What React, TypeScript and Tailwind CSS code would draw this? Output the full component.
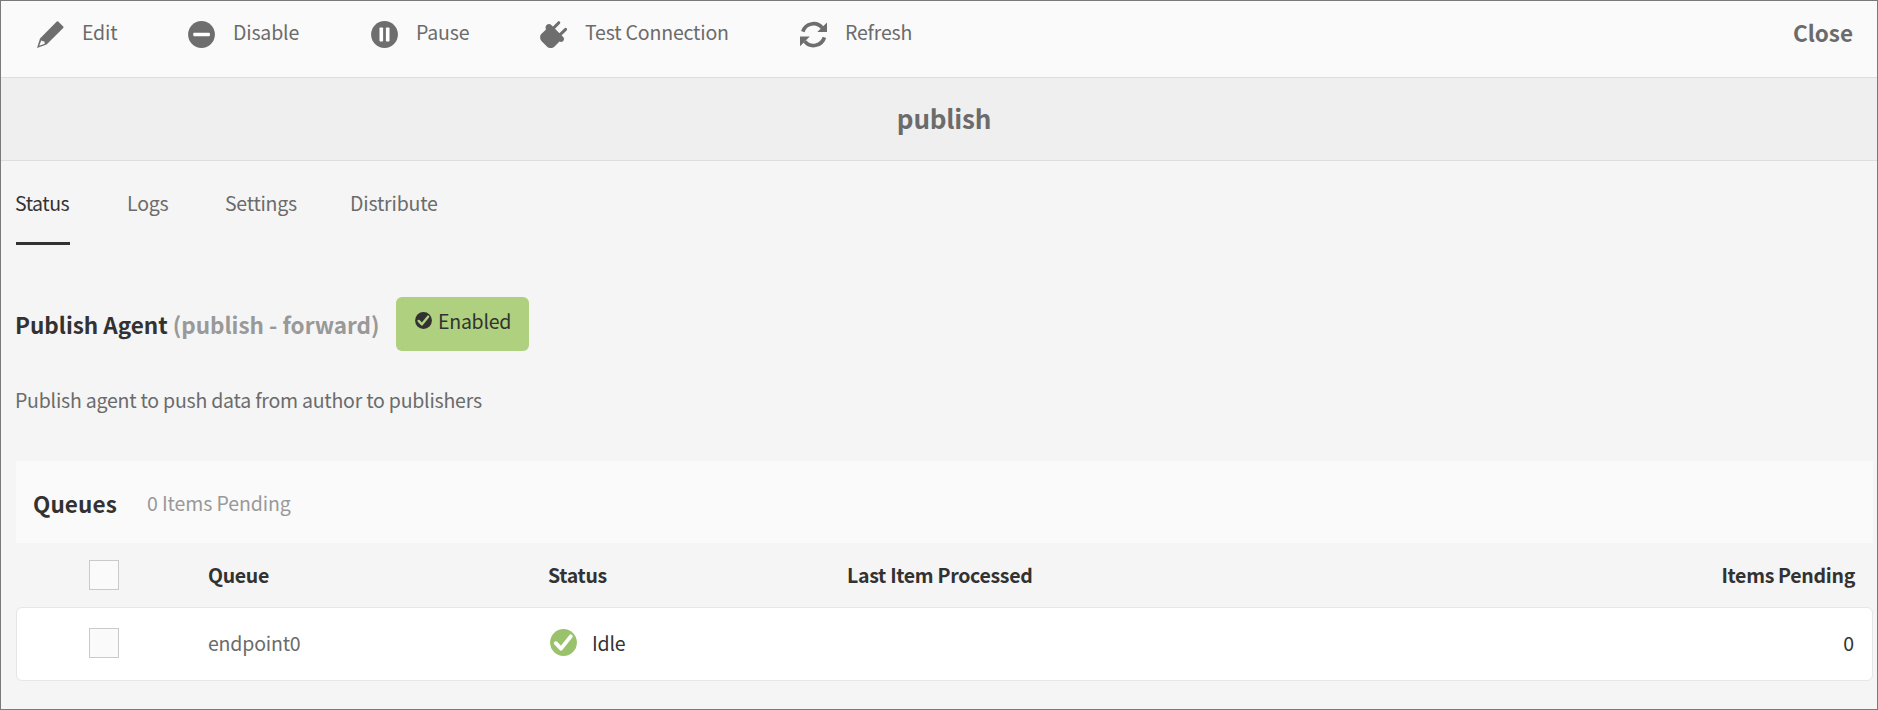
import type { ReactNode } from "react";

const EditIcon = () => (
  <svg className="mt-[3px] h-[27px] w-[27px] shrink-0" viewBox="0 0 27 27" fill="#6e6e6e">
    <path d="M19.8 0.6Q20.5-.1 21.2.6L26.2 5.5Q26.9 6.2 26.2 6.9L9.6 23.6 0 27 3 17.4ZM4.4 19.2 2.2 24.8 7.8 22.8 7.4 20.4 5 19.9Z" fillRule="evenodd" />
  </svg>
);

const DisableIcon = () => (
  <svg className="mt-[3px] h-[27px] w-[27px] shrink-0" viewBox="0 0 27 27">
    <circle cx="13.5" cy="13.5" r="13.4" fill="#6e6e6e" />
    <rect x="5.3" y="11.8" width="16.6" height="3.5" rx="0.8" fill="#fff" />
  </svg>
);

const PauseIcon = () => (
  <svg className="mt-[3px] h-[27px] w-[27px] shrink-0" viewBox="0 0 27 27">
    <circle cx="13.5" cy="13.5" r="13.4" fill="#6e6e6e" />
    <rect x="8.5" y="6.5" width="3.6" height="14" rx="0.8" fill="#fff" />
    <rect x="14.9" y="6.5" width="3.6" height="14" rx="0.8" fill="#fff" />
  </svg>
);

const PlugIcon = () => (
  <svg className="mt-[3px] h-[27px] w-[27px] shrink-0 overflow-visible" viewBox="0 0 27 27" fill="#6e6e6e">
    <path d="M6.4 4.2C7.8 2.7 10 2.7 11.3 4L23.2 16C24.4 17.3 24.2 19 23 20.2 22 21.2 20.3 21 19.5 20.6L14 26C12.4 27.3 9 27.3 7.4 26L1.6 20.2C-.3 18.2 -.3 14.8 1 13.3L6 8.4C5.4 7 5.3 5.3 6.4 4.2Z" />
    <path d="M13 7.6 18.8 1.7M19.6 14.2 25.6 8.4" stroke="#6e6e6e" strokeWidth="3" strokeLinecap="round" />
  </svg>
);

const RefreshIcon = () => (
  <svg className="mt-[3px] h-[27px] w-[27px] shrink-0" viewBox="0 0 27 27" fill="none">
    <path d="M2.8 10.6A11.3 11.3 0 0 1 22.3 6.9M24.4 16.4A11.3 11.3 0 0 1 4.8 20.3" stroke="#6e6e6e" strokeWidth="3.7" />
    <path d="M27 1.5V11H17.3ZM0 25.2V15.4H9.8Z" fill="#6e6e6e" />
  </svg>
);

function Check({ size, circle, mark }: { size: string; circle: string; mark: string }) {
  return (
    <svg className={`shrink-0 ${size}`} viewBox="0 0 27 27" fill="none">
      <circle cx="13.5" cy="13.5" r="13.4" fill={circle} />
      <path d="M5.8 14.2 11 19.6 20.8 7.4" stroke={mark} strokeWidth="3.9" strokeLinecap="round" strokeLinejoin="round" />
    </svg>
  );
}

function Action({ icon, label, width }: { icon: ReactNode; label: string; width: string }) {
  return (
    <button className={`flex items-start gap-[18px] text-left leading-[27px] ${width}`}>
      {icon}
      <span className="whitespace-nowrap">{label}</span>
    </button>
  );
}

const Checkbox = () => <span role="checkbox" aria-checked="false" className="ml-[72px] block h-[30px] w-[30px] border border-[#cacaca] bg-[#fafafa]" />;

export default function App() {
  return (
    <div className="flex h-[710px] w-[1878px] flex-col overflow-hidden border border-[#7a7a7a] bg-[#f5f5f5] font-['Noto_Sans_CJK_SC','Noto_Sans',sans-serif] text-[19.5px] tracking-[-0.18px] text-[#6b6b6b]">
      <header className="flex h-[77px] shrink-0 items-start border-b border-[#dedede] bg-[#fafafa] pt-[17px] pr-[24px] pl-[36px]">
        <Action icon={<EditIcon />} label="Edit" width="w-[151px]" />
        <Action icon={<DisableIcon />} label="Disable" width="w-[183px]" />
        <Action icon={<PauseIcon />} label="Pause" width="w-[169px]" />
        <Action icon={<PlugIcon />} label="Test Connection" width="w-[260px]" />
        <Action icon={<RefreshIcon />} label="Refresh" width="w-[150px]" />
        <button className="ml-auto pt-px text-[22.5px] leading-[27px] font-bold tracking-normal">Close</button>
      </header>
      <h1 className="h-[83px] shrink-0 border-b border-[#dedede] bg-[#efefef] pl-[10px] text-center text-[26px] leading-[79px] font-bold tracking-[-0.2px]">publish</h1>
      <main className="flex flex-col pr-[4px] pl-[15px]">
        <nav className="flex pt-[28px] leading-[27px]">
          <a className="mr-[57px] w-[54px] border-b-[3px] border-[#323232] pb-[26px] tracking-[-0.45px] text-[#323232]">
            <span className="-ml-px">Status</span>
          </a>
          <a className="w-[98px]">Logs</a>
          <a className="w-[125px] tracking-[-0.25px]">Settings</a>
          <a>Distribute</a>
        </nav>
        <section className="mt-[52px] flex h-[54px] items-center">
          <h2 className="-ml-px w-[381px] pt-[2px] text-[22.5px] font-bold tracking-[-0.01px] whitespace-nowrap text-[#323232]">
            Publish Agent <span className="text-[#999999]">(publish - forward)</span>
          </h2>
          <div className="flex h-[54px] w-[133px] items-center gap-[6px] rounded-[6px] bg-[#afd07e] pb-[7px] pl-[19px] tracking-[-0.25px] text-[#323232]">
            <Check size="h-[17px] w-[17px]" circle="#323232" mark="#afd07e" />
            Enabled
          </div>
        </section>
        <p className="mt-[35px] -ml-[1px] leading-[27px] tracking-[-0.22px]">Publish agent to push data from author to publishers</p>
        <section className="mt-[48px] flex h-[82px] items-center bg-[#fafafa] pt-[2px] pl-[17px]">
          <h3 className="w-[114px] pt-px text-[22.5px] font-bold tracking-[0.1px] text-[#323232]">Queues</h3>
          <span className="pb-px tracking-[-0.1px] text-[#999999]">0 Items Pending</span>
        </section>
        <div className="grid h-[64px] grid-cols-[191px_340px_299px_1fr_auto] items-center border-x border-transparent pr-[17px] font-bold tracking-[-0.3px] text-[#323232]">
          <Checkbox />
          <span>Queue</span>
          <span>Status</span>
          <span>Last Item Processed</span>
          <span>Items Pending</span>
        </div>
        <div className="grid h-[74px] grid-cols-[191px_340px_299px_1fr_auto] items-center rounded-[6px] border border-[#e6e6e6] bg-white pr-[18px] pb-[2px] text-[#323232]">
          <Checkbox />
          <span className="text-[#6b6b6b]">endpoint0</span>
          <span className="flex items-center gap-[15px] pl-[2px]">
            <Check size="mb-[2px] h-[27px] w-[27px]" circle="#9ac26b" mark="#ffffff" />
            Idle
          </span>
          <span />
          <span>0</span>
        </div>
      </main>
    </div>
  );
}
